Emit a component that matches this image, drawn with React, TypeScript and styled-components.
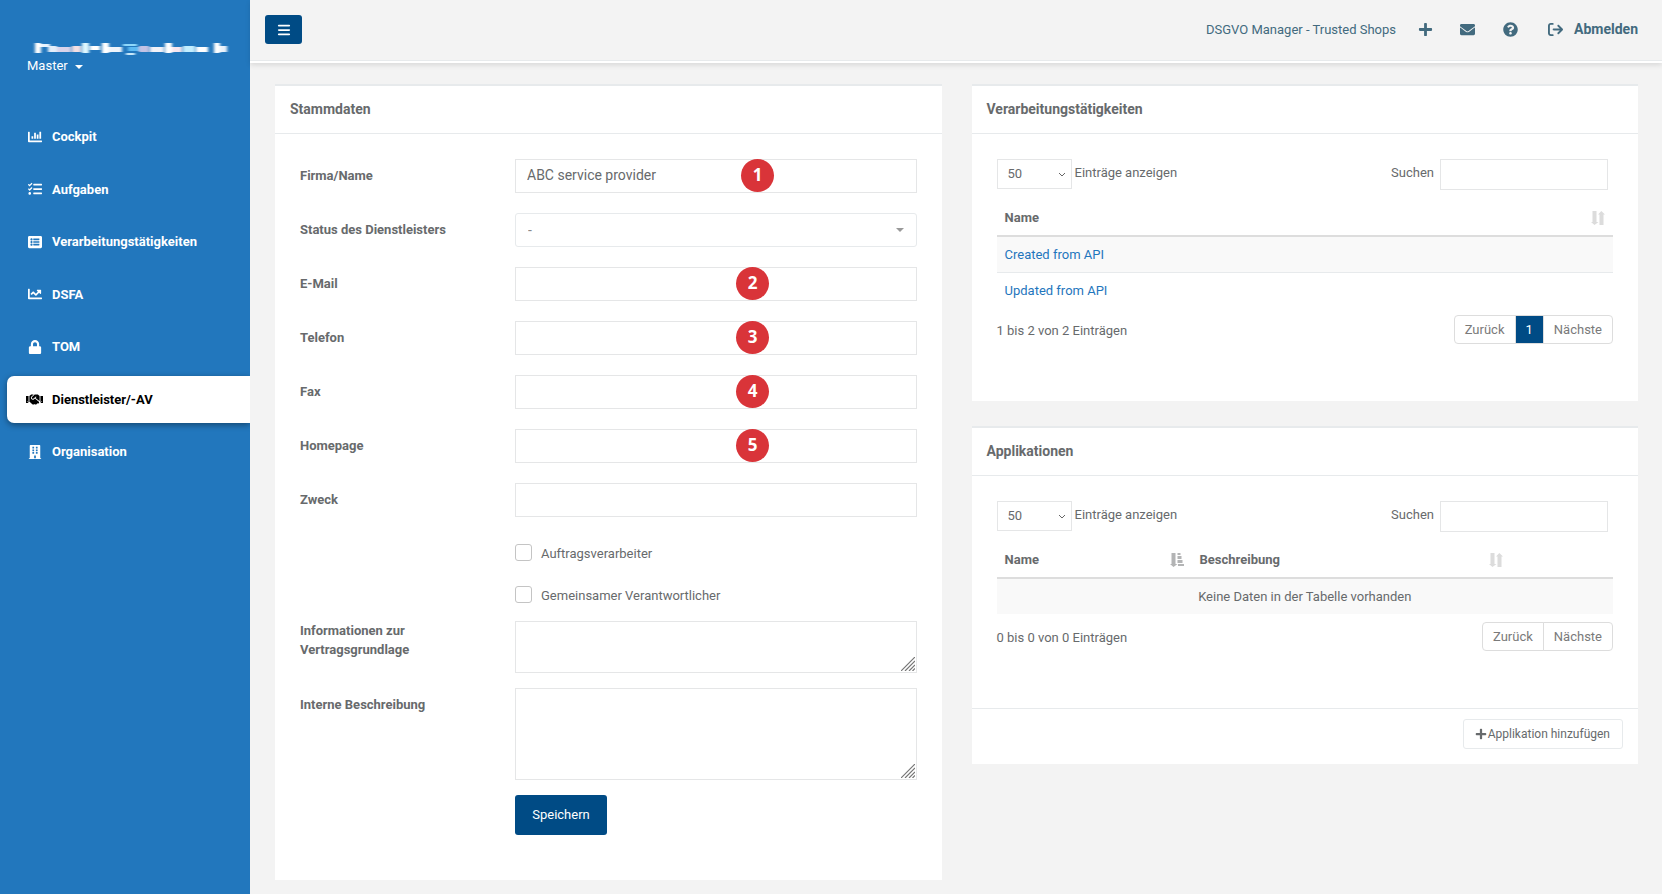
import React from 'react';
import styled, { createGlobalStyle, css } from 'styled-components';
import {
  FaChartBar,
  FaTasks,
  FaListAlt,
  FaChartLine,
  FaLock,
  FaHandshake,
  FaBuilding,
  FaPlus,
  FaEnvelope,
  FaQuestionCircle,
} from 'react-icons/fa';
import { FaArrowRightFromBracket, FaBars } from 'react-icons/fa6';

const color = {
  brand: '#2277bd',
  dark: '#004b85',
  text: '#676a6c',
  line: '#e7eaec',
  field: '#e5e6e7',
  page: '#f3f3f3',
  top: '#426a7e',
};

const GlobalStyle = createGlobalStyle`
  * { box-sizing: border-box; }
  body {
    margin: 0;
    background: ${color.page};
    color: ${color.text};
    font: 13px/19px Roboto, sans-serif;
  }
  a { color: inherit; text-decoration: none; }
  button, input, select, textarea { font: inherit; color: inherit; }
`;

const Page = styled.div`
  display: flex;
  min-height: 100vh;
`;

/* ---------- sidebar ---------- */

const Sidebar = styled.aside`
  flex: 0 0 250px;
  background: ${color.brand};
  color: #fff;
`;

const Profile = styled.div`
  display: flex;
  flex-direction: column;
  align-items: flex-start;
  height: 113px;
  padding: 39px 20px 0 27px;
`;

const AccountMark = styled.svg`
  display: block;
  height: 17px;
  width: 203px;
`;

const RoleButton = styled.button`
  display: flex;
  align-items: center;
  gap: 7px;
  padding: 0;
  border: 0;
  background: none;
`;

const Caret = styled.span`
  margin-top: 3px;
  border: 4px solid transparent;
  border-top-color: currentColor;
  border-bottom: 0;
`;

const Nav = styled.nav`
  display: flex;
  flex-direction: column;
  justify-content: space-between;
  height: 362px;
`;

const NavItem = styled.a<{ $active?: boolean }>`
  display: flex;
  align-items: center;
  gap: 9px;
  height: 47px;
  margin-left: 7px;
  padding-left: 19px;
  border-radius: 7px 0 0 7px;
  font-weight: 700;
  ${(p) =>
    p.$active &&
    css`
      background: #fff;
      color: #000;
      box-shadow: 0 2px 6px rgba(0, 0, 0, 0.4);
      clip-path: inset(-10px 0 -10px -10px);
    `}
`;

const NavIcon = styled.span<{ $size: number }>`
  display: flex;
  justify-content: center;
  width: 17px;
  font-size: ${(p) => p.$size}px;
  svg {
    flex: none;
  }
`;

/* ---------- top bar ---------- */

const Main = styled.div`
  flex: 1;
  min-width: 0;
`;

const TopBar = styled.header`
  display: flex;
  align-items: flex-start;
  justify-content: space-between;
  height: 63px;
  padding: 15px 24px 0 15px;
  border-bottom: 2px solid #fff;
  box-shadow: inset 0 -1px 0 ${color.line}, 0 2px 5px rgba(0, 0, 0, 0.11);
  color: ${color.top};
`;

const MenuButton = styled.button`
  display: flex;
  align-items: center;
  justify-content: center;
  width: 37px;
  height: 29px;
  padding: 0;
  border: 0;
  border-radius: 3px;
  background: ${color.dark};
  color: #fff;
  font-size: 14px;
`;

const TopLinks = styled.div`
  display: flex;
  align-items: center;
  height: 29px;
`;

const Product = styled.span`
  margin-right: 22px;
`;

const TopLink = styled.a<{ $gap?: number }>`
  display: flex;
  align-items: center;
  gap: 11px;
  margin-right: ${(p) => p.$gap ?? 0}px;
  font-size: 15px;
`;

const Logout = styled.strong`
  font-size: 14px;
`;

/* ---------- panels ---------- */

const Content = styled.main`
  display: grid;
  grid-template-columns: minmax(0, 1fr) minmax(0, 1fr);
  align-items: start;
  gap: 30px;
  padding: 21px 24px 14px 25px;
`;

const Stack = styled.div`
  display: grid;
  gap: 25px;
`;

const Panel = styled.section`
  border-top: 2px solid ${color.line};
  background: #fff;
`;

const PanelTitle = styled.h5`
  margin: 0;
  padding: 14px 15px;
  border-bottom: 1px solid ${color.line};
  font-size: 14px;
  line-height: 19px;
  font-weight: 700;
`;

const PanelBody = styled.div<{ $bottom: number }>`
  padding: 25px 25px ${(p) => p.$bottom}px;
`;

const PanelFooter = styled.footer`
  display: flex;
  justify-content: flex-end;
  padding: 10px 15px 15px;
  border-top: 1px solid ${color.line};
`;

/* ---------- form ---------- */

const Row = styled.div<{ $gap?: number }>`
  display: grid;
  grid-template-columns: 215px minmax(0, 1fr);
  margin-bottom: ${(p) => p.$gap ?? 20}px;
`;

const Label = styled.label`
  padding: 7px 30px 0 0;
  font-weight: 700;
`;

const TallLabel = styled(Label)`
  padding-top: 0;
`;

const Cell = styled.div`
  grid-column: 2;
`;

const Field = styled.div`
  position: relative;
  display: flex;
`;

const TextInput = styled.input`
  width: 100%;
  height: 34px;
  padding: 6px 11px 8px;
  border: 1px solid ${color.field};
  background: #fff;
  font-size: 14px;
`;

const StatusSelect = styled.select`
  appearance: none;
  width: 100%;
  height: 34px;
  padding: 4px 12px;
  border: 1px solid ${color.line};
  border-radius: 3px;
  background: #fff;
  color: #8a8a8a;
  font-size: 14px;
`;

const SelectCaret = styled(Caret)`
  position: absolute;
  right: 13px;
  top: 12px;
  color: #999;
  pointer-events: none;
`;

const Badge = styled.span<{ $left: number }>`
  position: absolute;
  left: ${(p) => p.$left}px;
  top: 0;
  width: 33px;
  height: 33px;
  border-radius: 50%;
  background: #d93439;
  color: #fff;
  font: 700 17px/32px 'Open Sans', sans-serif;
  text-align: center;
`;

const CheckLabel = styled.label`
  display: flex;
  align-items: center;
  gap: 9px;
  height: 19px;
`;

const CheckBox = styled.input`
  appearance: none;
  width: 17px;
  height: 17px;
  margin: 0 0 2px;
  border: 1px solid #c4c4c4;
  border-radius: 3px;
  background: #fff;
`;

const TextArea = styled.textarea<{ $height: number }>`
  display: block;
  width: 100%;
  height: ${(p) => p.$height}px;
  padding: 6px 12px;
  border: 1px solid ${color.field};
  resize: none;
`;

const Grip = styled.svg`
  position: absolute;
  right: 2px;
  bottom: 2px;
  pointer-events: none;
`;

const SaveButton = styled.button`
  width: 92px;
  height: 40px;
  padding: 0 0 1px;
  border: 0;
  border-radius: 3px;
  background: ${color.dark};
  color: #fff;
`;

/* ---------- data tables ---------- */

const Controls = styled.div`
  display: flex;
  justify-content: space-between;
  height: 41px;
  padding-right: 5px;
`;

const ControlLabel = styled.label<{ $gap: number }>`
  display: flex;
  align-items: flex-start;
  gap: ${(p) => p.$gap}px;
  line-height: 28px;
`;

const LengthField = styled.span`
  position: relative;
  display: flex;
`;

const LengthSelect = styled.select`
  appearance: none;
  width: 75px;
  height: 30px;
  padding: 0 10px;
  border: 1px solid ${color.field};
  border-radius: 0;
  background: #fff;
`;

const Chevron = styled.svg`
  position: absolute;
  right: 6px;
  top: 12px;
  pointer-events: none;
`;

const SearchInput = styled.input`
  width: 168px;
  height: 31px;
  padding: 5px 10px;
  border: 1px solid ${color.field};
  background: #fff;
`;

const Table = styled.table`
  width: 100%;
  border-collapse: separate;
  border-spacing: 0;
  table-layout: fixed;
`;

const Th = styled.th`
  height: 37px;
  padding: 0 8px;
  border-bottom: 2px solid #dddddd;
  text-align: left;
`;

const HeadCell = styled.div`
  display: flex;
  align-items: center;
  justify-content: space-between;
`;

const Td = styled.td<{ $center?: boolean }>`
  height: 35px;
  padding: 0 8px;
  text-align: ${(p) => (p.$center ? 'center' : 'left')};
`;

const Tr = styled.tr`
  &:nth-child(odd) {
    background: #f9f9f9;
  }
  & + & ${Td} {
    border-top: 1px solid ${color.line};
  }
`;

const DataLink = styled.a`
  color: #1f76bd;
`;

const TableFoot = styled.div`
  display: flex;
  align-items: flex-start;
  justify-content: space-between;
  padding-top: 8px;
`;

const Info = styled.span`
  padding-top: 6px;
`;

const Pager = styled.div`
  display: flex;
`;

const PageButton = styled.button<{ $current?: boolean }>`
  height: 29px;
  margin-left: -1px;
  padding: 0 10px 1px;
  border: 1px solid #dddddd;
  background: #fff;
  color: #7a7a7a;
  &:first-child {
    border-radius: 4px 0 0 4px;
  }
  &:last-child {
    border-radius: 0 4px 4px 0;
  }
  ${(p) =>
    p.$current &&
    css`
      background: ${color.dark};
      color: #fff;
    `}
`;

const AddButton = styled.button`
  display: flex;
  align-items: center;
  gap: 1px;
  height: 30px;
  padding: 0 12px 0 11px;
  border: 1px solid ${color.line};
  border-radius: 3px;
  background: #fff;
  font-size: 12px;
`;

const navItems = [
  { label: 'Cockpit', icon: <FaChartBar />, size: 14 },
  { label: 'Aufgaben', icon: <FaTasks />, size: 14 },
  { label: 'Verarbeitungstätigkeiten', icon: <FaListAlt />, size: 14 },
  { label: 'DSFA', icon: <FaChartLine />, size: 14 },
  { label: 'TOM', icon: <FaLock />, size: 14 },
  { label: 'Dienstleister/-AV', icon: <FaHandshake />, size: 17, active: true },
  { label: 'Organisation', icon: <FaBuilding />, size: 14 },
];

const textFields = [
  { id: 'email', label: 'E-Mail', badge: 2 },
  { id: 'telefon', label: 'Telefon', badge: 3 },
  { id: 'fax', label: 'Fax', badge: 4 },
  { id: 'homepage', label: 'Homepage', badge: 5 },
  { id: 'zweck', label: 'Zweck' },
];

// Softened strokes of the obscured account name: x, y, width, height, fill
const smears: [number, number, number, number, string][] = [
  [8, 4, 6, 10, '#fff'],
  [14, 5, 9, 3, '#e8f4ff'],
  [21, 7, 9, 6, '#e3eefa'],
  [30, 8, 14, 5, '#d9d3ea'],
  [45, 7, 9, 6, '#f3dfe3'],
  [55, 4, 7, 10, '#dff8ff'],
  [63, 7, 10, 4, '#fff'],
  [75, 4, 7, 10, '#fff'],
  [82, 8, 13, 5, '#eef4fb'],
  [96, 5, 14, 2, '#8fd8fb'],
  [99, 14, 9, 2, '#c9e9fa'],
  [101, 8, 12, 4, '#5cb9f2'],
  [112, 7, 10, 6, '#c3c2e4'],
  [123, 8, 14, 5, '#f2f2f8'],
  [138, 4, 7, 10, '#fff'],
  [145, 8, 10, 5, '#f7e6ef'],
  [156, 7, 12, 6, '#c3eeff'],
  [169, 8, 12, 5, '#fff'],
  [187, 4, 6, 10, '#fff'],
  [193, 7, 7, 6, '#e9f2fb'],
];

function ObscuredName() {
  return (
    <AccountMark viewBox="0 0 203 17" aria-hidden="true">
      <filter id="soften" x="-5%" y="-20%" width="110%" height="140%">
        <feGaussianBlur stdDeviation="1.5 0.4" />
      </filter>
      <g filter="url(#soften)">
        {smears.map(([x, y, w, h, fill]) => (
          <rect key={x} x={x} y={y} width={w} height={h} fill={fill} />
        ))}
      </g>
    </AccountMark>
  );
}

function SortBoth() {
  return (
    <svg width="14" height="14" viewBox="0 0 14 14" fill="#dcdcdc" aria-hidden="true">
      <path d="M1.500 0h4v11h2L3.500 14 0 11h1.500zM8.500 14h4V3.500H14L10.300 0 7 3.500h1.500z" />
    </svg>
  );
}

function SortAsc() {
  return (
    <svg width="14" height="14" viewBox="0 0 14 14" fill="#b3b4b5" aria-hidden="true">
      <path d="M1.500 0h4v11h2L3.500 14 0 11h1.500zM7.500 0h3v2h-3zM7.500 3h4v3h-4zM7.500 7h5v3h-5zM8 11h6v2H8z" />
    </svg>
  );
}

function ResizeGrip() {
  return (
    <Grip width="14" height="14" viewBox="0 0 14 14" stroke="#777" strokeWidth="1.200" aria-hidden="true">
      <path d="M0 14 14 0M4 14 14 4M8 14 14 8M11.500 14 14 11.500" />
    </Grip>
  );
}

function TableControls({ id }: { id: string }) {
  return (
    <Controls>
      <ControlLabel $gap={3}>
        <LengthField>
          <LengthSelect name={`${id}-length`} defaultValue="50">
            <option>50</option>
            <option>100</option>
          </LengthSelect>
          <Chevron width="8" height="7" viewBox="0 0 8 7" fill="none" stroke="#666" aria-hidden="true">
            <path d="M1 2 4 5 7 2" />
          </Chevron>
        </LengthField>
        Einträge anzeigen
      </ControlLabel>
      <ControlLabel $gap={6}>
        Suchen
        <SearchInput type="search" name={`${id}-search`} />
      </ControlLabel>
    </Controls>
  );
}

function Pagination({ info, pages }: { info: string; pages: number[] }) {
  return (
    <TableFoot>
      <Info>{info}</Info>
      <Pager>
        <PageButton type="button">Zurück</PageButton>
        {pages.map((n) => (
          <PageButton type="button" key={n} $current>
            {n}
          </PageButton>
        ))}
        <PageButton type="button">Nächste</PageButton>
      </Pager>
    </TableFoot>
  );
}

function MasterDataForm() {
  return (
    <Panel>
      <PanelTitle>Stammdaten</PanelTitle>
      <PanelBody as="form" $bottom={45}>
        <Row>
          <Label htmlFor="name">Firma/Name</Label>
          <Cell>
            <Field>
              <TextInput id="name" defaultValue="ABC service provider" />
              <Badge $left={226}>1</Badge>
            </Field>
          </Cell>
        </Row>
        <Row>
          <Label htmlFor="status">Status des Dienstleisters</Label>
          <Cell>
            <Field>
              <StatusSelect id="status">
                <option>-</option>
              </StatusSelect>
              <SelectCaret />
            </Field>
          </Cell>
        </Row>
        {textFields.map((f) => (
          <Row key={f.id} $gap={f.id === 'zweck' ? 27 : 20}>
            <Label htmlFor={f.id}>{f.label}</Label>
            <Cell>
              <Field>
                <TextInput id={f.id} />
                {f.badge && <Badge $left={221}>{f.badge}</Badge>}
              </Field>
            </Cell>
          </Row>
        ))}
        <Row $gap={23}>
          <Cell>
            <CheckLabel>
              <CheckBox type="checkbox" />
              Auftragsverarbeiter
            </CheckLabel>
          </Cell>
        </Row>
        <Row $gap={16}>
          <Cell>
            <CheckLabel>
              <CheckBox type="checkbox" />
              Gemeinsamer Verantwortlicher
            </CheckLabel>
          </Cell>
        </Row>
        <Row $gap={15}>
          <TallLabel htmlFor="vertrag">Informationen zur Vertragsgrundlage</TallLabel>
          <Cell>
            <Field>
              <TextArea id="vertrag" $height={52} />
              <ResizeGrip />
            </Field>
          </Cell>
        </Row>
        <Row $gap={15}>
          <Label htmlFor="intern">Interne Beschreibung</Label>
          <Cell>
            <Field>
              <TextArea id="intern" $height={92} />
              <ResizeGrip />
            </Field>
          </Cell>
        </Row>
        <Row $gap={0}>
          <Cell>
            <SaveButton type="button">Speichern</SaveButton>
          </Cell>
        </Row>
      </PanelBody>
    </Panel>
  );
}

function ProcessingPanel() {
  return (
    <Panel>
      <PanelTitle>Verarbeitungstätigkeiten</PanelTitle>
      <PanelBody $bottom={57}>
        <TableControls id="processing" />
        <Table>
          <thead>
            <tr>
              <Th>
                <HeadCell>
                  Name
                  <SortBoth />
                </HeadCell>
              </Th>
            </tr>
          </thead>
          <tbody>
            {['Created from API', 'Updated from API'].map((name) => (
              <Tr key={name}>
                <Td>
                  <DataLink href="#">{name}</DataLink>
                </Td>
              </Tr>
            ))}
          </tbody>
        </Table>
        <Pagination info="1 bis 2 von 2 Einträgen" pages={[1]} />
      </PanelBody>
    </Panel>
  );
}

const NameCol = styled.col`
  width: 195px;
`;

const ActionCol = styled.col`
  width: 102px;
`;

function ApplicationsPanel() {
  return (
    <Panel>
      <PanelTitle>Applikationen</PanelTitle>
      <PanelBody $bottom={57}>
        <TableControls id="applications" />
        <Table>
          <colgroup>
            <NameCol />
            <col />
            <ActionCol />
          </colgroup>
          <thead>
            <tr>
              <Th>
                <HeadCell>
                  Name
                  <SortAsc />
                </HeadCell>
              </Th>
              <Th>
                <HeadCell>
                  Beschreibung
                  <SortBoth />
                </HeadCell>
              </Th>
              <Th />
            </tr>
          </thead>
          <tbody>
            <Tr>
              <Td colSpan={3} $center>
                Keine Daten in der Tabelle vorhanden
              </Td>
            </Tr>
          </tbody>
        </Table>
        <Pagination info="0 bis 0 von 0 Einträgen" pages={[]} />
      </PanelBody>
      <PanelFooter>
        <AddButton type="button">
          <FaPlus />
          Applikation hinzufügen
        </AddButton>
      </PanelFooter>
    </Panel>
  );
}

export default function App() {
  return (
    <Page>
      <GlobalStyle />
      <Sidebar>
        <Profile>
          <ObscuredName />
          <RoleButton type="button">
            Master
            <Caret />
          </RoleButton>
        </Profile>
        <Nav>
          {navItems.map((item) => (
            <NavItem key={item.label} href="#" $active={item.active}>
              <NavIcon $size={item.size}>{item.icon}</NavIcon>
              {item.label}
            </NavItem>
          ))}
        </Nav>
      </Sidebar>
      <Main>
        <TopBar>
          <MenuButton type="button" aria-label="Menü">
            <FaBars />
          </MenuButton>
          <TopLinks>
            <Product>DSGVO Manager - Trusted Shops</Product>
            <TopLink href="#" aria-label="Hinzufügen" $gap={27}>
              <FaPlus />
            </TopLink>
            <TopLink href="#" aria-label="Nachrichten" $gap={28}>
              <FaEnvelope />
            </TopLink>
            <TopLink href="#" aria-label="Hilfe" $gap={30}>
              <FaQuestionCircle />
            </TopLink>
            <TopLink href="#">
              <FaArrowRightFromBracket />
              <Logout>Abmelden</Logout>
            </TopLink>
          </TopLinks>
        </TopBar>
        <Content>
          <MasterDataForm />
          <Stack>
            <ProcessingPanel />
            <ApplicationsPanel />
          </Stack>
        </Content>
      </Main>
    </Page>
  );
}
